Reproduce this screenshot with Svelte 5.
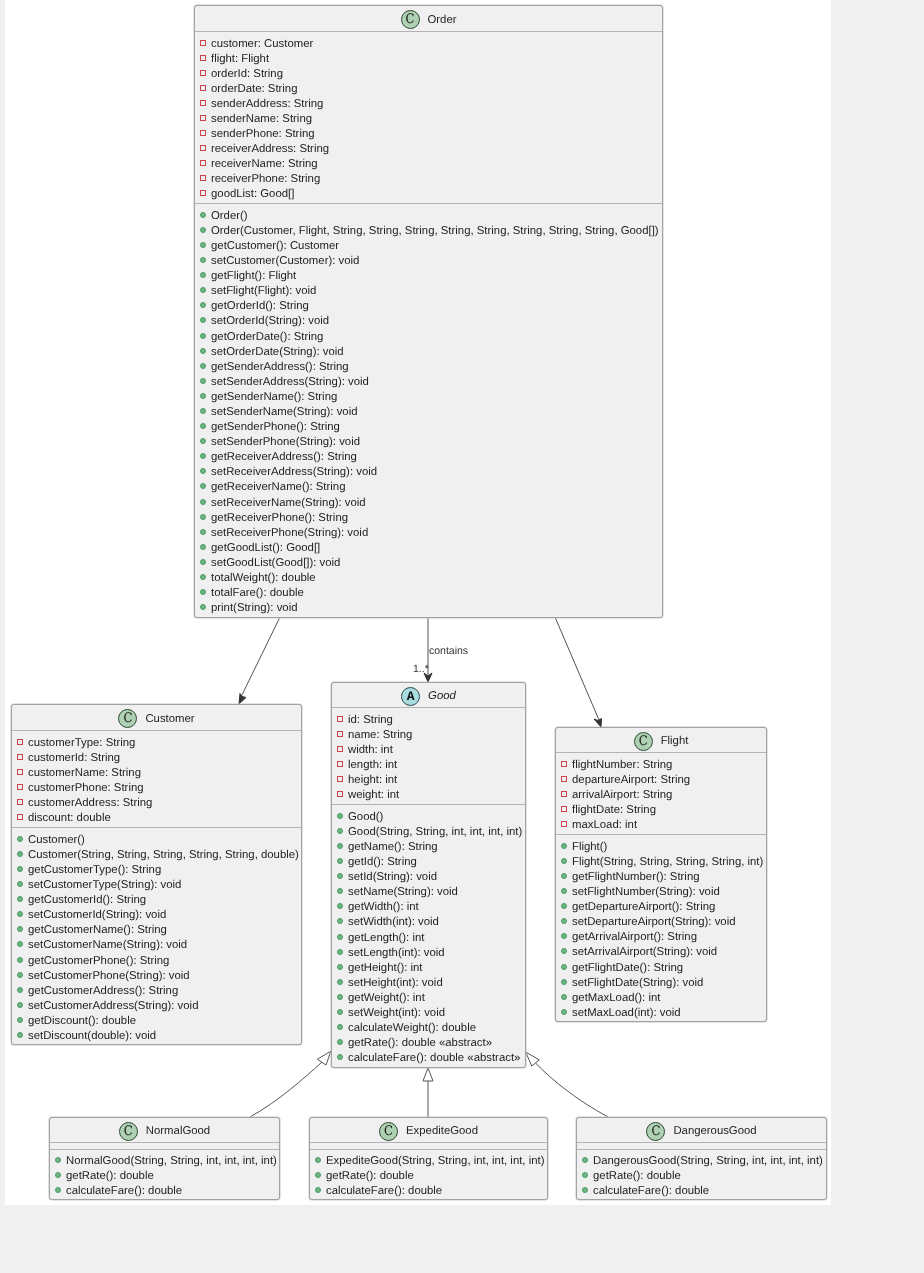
<script>
  const getSet = (name, type) => [`get${name}(): ${type}`, `set${name}(${type}): void`];

  const nodes = [
    {
      name: "Order", x: 189, y: 5, w: 469, head: 25,
      fields: ["customer: Customer", "flight: Flight", "orderId: String", "orderDate: String", "senderAddress: String", "senderName: String", "senderPhone: String", "receiverAddress: String", "receiverName: String", "receiverPhone: String", "goodList: Good[]"],
      methods: ["Order()", "Order(Customer, Flight, String, String, String, String, String, String, String, String, Good[])",
        ...getSet("Customer", "Customer"), ...getSet("Flight", "Flight"), ...getSet("OrderId", "String"), ...getSet("OrderDate", "String"),
        ...getSet("SenderAddress", "String"), ...getSet("SenderName", "String"), ...getSet("SenderPhone", "String"),
        ...getSet("ReceiverAddress", "String"), ...getSet("ReceiverName", "String"), ...getSet("ReceiverPhone", "String"),
        ...getSet("GoodList", "Good[]"), "totalWeight(): double", "totalFare(): double", "print(String): void"],
    },
    {
      name: "Customer", x: 6, y: 704, w: 291, head: 25,
      fields: ["customerType: String", "customerId: String", "customerName: String", "customerPhone: String", "customerAddress: String", "discount: double"],
      methods: ["Customer()", "Customer(String, String, String, String, String, double)",
        ...getSet("CustomerType", "String"), ...getSet("CustomerId", "String"), ...getSet("CustomerName", "String"),
        ...getSet("CustomerPhone", "String"), ...getSet("CustomerAddress", "String"), ...getSet("Discount", "double")],
    },
    {
      name: "Good", abstract: true, x: 326, y: 682, w: 195, head: 24,
      fields: ["id: String", "name: String", "width: int", "length: int", "height: int", "weight: int"],
      methods: ["Good()", "Good(String, String, int, int, int, int)", "getName(): String", "getId(): String", "setId(String): void", "setName(String): void",
        ...getSet("Width", "int"), ...getSet("Length", "int"), ...getSet("Height", "int"), ...getSet("Weight", "int"),
        "calculateWeight(): double", "getRate(): double «abstract»", "calculateFare(): double «abstract»"],
    },
    {
      name: "Flight", x: 550, y: 727, w: 212, head: 24,
      fields: ["flightNumber: String", "departureAirport: String", "arrivalAirport: String", "flightDate: String", "maxLoad: int"],
      methods: ["Flight()", "Flight(String, String, String, String, int)",
        ...getSet("FlightNumber", "String"), ...getSet("DepartureAirport", "String"), ...getSet("ArrivalAirport", "String"),
        ...getSet("FlightDate", "String"), ...getSet("MaxLoad", "int")],
    },
    {
      name: "NormalGood", x: 44, y: 1117, w: 231, head: 24, fields: [],
      methods: ["NormalGood(String, String, int, int, int, int)", "getRate(): double", "calculateFare(): double"],
    },
    {
      name: "ExpediteGood", x: 304, y: 1117, w: 239, head: 24, fields: [],
      methods: ["ExpediteGood(String, String, int, int, int, int)", "getRate(): double", "calculateFare(): double"],
    },
    {
      name: "DangerousGood", x: 571, y: 1117, w: 251, head: 24, fields: [],
      methods: ["DangerousGood(String, String, int, int, int, int)", "getRate(): double", "calculateFare(): double"],
    },
  ];
</script>

<div class="page">
  <div class="canvas">
    <svg class="links" width="826" height="1205" viewBox="0 0 826 1205" fill="none" aria-hidden="true">
      <g stroke="#555" stroke-width="1">
        <path d="M275 617L236 697" />
        <path d="M423 617V677" />
        <path d="M550 617L594 720" />
        <path d="M245 1117C275 1100 298 1079 317 1062" />
        <path d="M423 1117V1081" />
        <path d="M603 1117C572 1100 548 1081 530.500 1063" />
      </g>
      <g fill="#333" stroke="#333" stroke-width="1" stroke-linejoin="round">
        <path d="M234 704L235 693.500L237 696.500L241 697.500Z" />
        <path d="M423 682L419 673L423 676L427 673Z" />
        <path d="M596 727L589 719L593 720.500L596.500 718.500Z" />
      </g>
      <g fill="#fff" stroke="#555" stroke-width="1" stroke-linejoin="miter">
        <path d="M326 1051L321 1065L312.300 1059.300Z" />
        <path d="M423 1068L428 1081H418Z" />
        <path d="M520.700 1052L526.700 1066L534.300 1060Z" />
      </g>
    </svg>

    <span class="edge-label contains">contains</span>
    <span class="edge-label mult">1..*</span>

    {#each nodes as node (node.name)}
      <section class="node" style:left="{node.x}px" style:top="{node.y}px" style:width="{node.w}px">
        <header class="node-head" style:height="{node.head}px">
          <span class="badge" class:abstract={node.abstract}>{node.abstract ? "A" : "C"}</span>
          <span class="node-name" class:abstract={node.abstract}>{node.name}</span>
        </header>
        <ul class="members fields" class:empty={node.fields.length === 0}>
          {#each node.fields as field}
            <li><i class="private"></i>{field}</li>
          {/each}
        </ul>
        <ul class="members methods">
          {#each node.methods as method}
            <li><i class="public"></i>{method}</li>
          {/each}
        </ul>
      </section>
    {/each}
  </div>
</div>

<style>
  :global(body) {
    background: #f0f0f0;
  }
  .page {
    height: 1273px;
    padding-left: 5px;
    font-family: "Liberation Sans", Arial, sans-serif;
    color: #222;
    text-rendering: geometricPrecision;
  }
  .canvas {
    position: relative;
    width: 826px;
    height: 1205px;
    background: #fff;
    filter: blur(0.35px);
  }
  .links {
    position: absolute;
    left: 0;
    top: 0;
  }
  .edge-label {
    position: absolute;
    font-size: 10.500px;
    line-height: 12px;
    color: #333;
  }
  .contains { left: 424px; top: 645px; }
  .mult { left: 408px; top: 663px; }
  .node {
    position: absolute;
    box-sizing: border-box;
    border: 1px solid #a3a3a3;
    border-radius: 3px;
    background: #f0f0f0;
    box-shadow: 0 0 0 0.5px #c8c8c8;
  }
  .node-head {
    display: flex;
    align-items: center;
    justify-content: center;
    gap: 8px;
    box-sizing: border-box;
    padding-top: 2px;
    font-size: 11.350px;
  }
  .badge {
    display: grid;
    place-items: center;
    box-sizing: border-box;
    width: 19px;
    height: 19px;
    border: 1px solid #2f4a33;
    border-radius: 50%;
    background: #add1b2;
    color: #111;
    font-family: "DejaVu Serif Condensed", "DejaVu Serif", serif;
    font-size: 13px;
    line-height: 1;
  }
  .badge.abstract {
    background: #a9dcdf;
    border-color: #2a4a4c;
    font-family: "Liberation Mono", monospace;
    font-weight: 700;
    font-size: 13px;
  }
  .node-name.abstract {
    font-style: italic;
  }
  .members {
    margin: 0;
    border-top: 1px solid #b4b4b4;
    list-style: none;
  }
  .fields {
    padding: 4px 0 2px;
  }
  .fields.empty {
    height: 7px;
    box-sizing: border-box;
    padding: 0;
  }
  .methods {
    padding: 4px 0 1px;
  }
  .empty + .methods {
    padding-top: 3px;
  }
  .members li {
    display: flex;
    align-items: center;
    box-sizing: border-box;
    padding: 1.500px 0 0 5px;
    font-size: 11.360px;
    line-height: 15px;
    white-space: pre;
  }
  .methods li {
    height: 15.100px;
  }
  .fields li {
    height: 15px;
  }
  .members i {
    flex: none;
    box-sizing: border-box;
    width: 6px;
    height: 6px;
    margin: -3px 5px 0 0;
  }
  .private {
    border: 1px solid #c9444b;
  }
  .public {
    border: 1px solid #4d9a66;
    border-radius: 50%;
    background: #6bb683;
  }
</style>
